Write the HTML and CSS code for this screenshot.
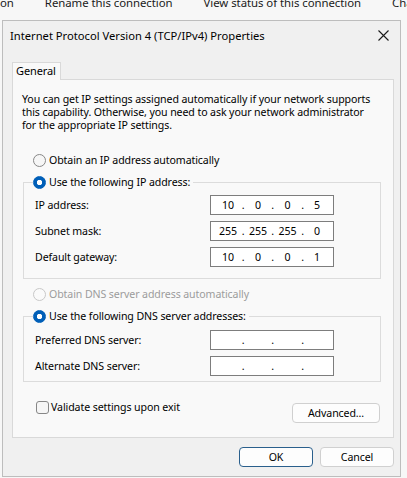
FILE: index.html
```html
<!DOCTYPE html>
<html>
<head>
<meta charset="utf-8">
<link rel="stylesheet" href="styles.css">
</head>
<body>
<div class="topbar"><span>on</span><span>Rename this connection</span><span>View status of this connection</span><span>Cha</span></div>
<div class="dialog">
  <div class="titlebar">
    <span class="title">Internet Protocol Version 4 (TCP/IPv4) Properties</span>
    <svg class="close" width="11" height="11" viewBox="0 0 11 11"><path d="M0.5 0.5L10.5 10.5M10.5 0.5L0.5 10.5" stroke="#1a1a1a" stroke-width="1.1" fill="none"/></svg>
  </div>
  <div class="tabs"><div class="tab">General</div></div>
  <div class="panel">
    <p class="intro">You can get IP settings assigned automatically if your network supports<br>this capability. Otherwise, you need to ask your network administrator<br>for the appropriate IP settings.</p>
    <div class="opt opt-first"><span class="radio"></span>Obtain an IP address automatically</div>
    <fieldset class="group group-ip">
      <legend class="opt"><span class="radio checked"></span>Use the following IP address:</legend>
      <div class="field"><span class="label">IP address:</span><div class="ip"><span>10</span><i>.</i><span>0</span><i>.</i><span>0</span><i>.</i><span>5</span></div></div>
      <div class="field"><span class="label">Subnet mask:</span><div class="ip"><span>255</span><i>.</i><span>255</span><i>.</i><span>255</span><i>.</i><span>0</span></div></div>
      <div class="field"><span class="label">Default gateway:</span><div class="ip"><span>10</span><i>.</i><span>0</span><i>.</i><span>0</span><i>.</i><span>1</span></div></div>
    </fieldset>
    <div class="opt opt-dns disabled"><span class="radio"></span>Obtain DNS server address automatically</div>
    <fieldset class="group group-dns">
      <legend class="opt"><span class="radio checked"></span>Use the following DNS server addresses:</legend>
      <div class="field"><span class="label">Preferred DNS server:</span><div class="ip"><span></span><i>.</i><span></span><i>.</i><span></span><i>.</i><span></span></div></div>
      <div class="field"><span class="label">Alternate DNS server:</span><div class="ip"><span></span><i>.</i><span></span><i>.</i><span></span><i>.</i><span></span></div></div>
    </fieldset>
    <div class="bottomrow">
      <div class="check"><span class="box"></span>Validate settings upon exit</div>
      <div class="btn btn-adv">Advanced...</div>
    </div>
  </div>
  <div class="footer">
    <div class="btn btn-ok">OK</div>
    <div class="btn">Cancel</div>
  </div>
</div>
</body>
</html>
```
FILE: styles.css
```css
html, body {
  margin: 0;
  padding: 0;
}
body {
  width: 407px;
  height: 478px;
  overflow: hidden;
  background: #f7f7f7;
  font-family: "Noto Sans", "Open Sans", sans-serif;
  font-size: 10.6px;
  letter-spacing: -0.1px;
  color: #000;
}
.topbar {
  height: 20px;
  display: flex;
  gap: 31px;
  font-size: 11.4px;
  letter-spacing: -0.05px;
  line-height: 14px;
  color: #1a1a1a;
  white-space: nowrap;
  overflow: hidden;
}
.topbar span {
  margin-top: -4px;
}
.topbar span:first-child {
  width: 14px;
}
.dialog {
  margin-left: 2px;
  width: 399px;
  height: 457px;
  box-sizing: border-box;
  border: 1px solid #bdbdbd;
  background: #f0f0f0;
  display: flex;
  flex-direction: column;
}
.titlebar {
  height: 41px;
  box-sizing: border-box;
  display: flex;
  align-items: flex-start;
  justify-content: space-between;
  padding: 7px 11px 0 7px;
}
.title {
  line-height: 16px;
  font-size: 11.2px;
  letter-spacing: 0;
}
.close {
  margin-top: 2px;
}
.tabs {
  height: 17px;
  padding-left: 9px;
}
.tab {
  position: relative;
  z-index: 1;
  width: 49px;
  height: 18px;
  box-sizing: border-box;
  border: 1px solid #d9d9d9;
  border-bottom: none;
  background: #f9f9f9;
  padding-left: 3px;
  line-height: 15px;
  font-size: 11px;
}
.panel {
  margin: 0 6px 0 9px;
  height: 359px;
  box-sizing: border-box;
  border: 1px solid #d9d9d9;
  background: #f9f9f9;
  padding: 13px 0 0 9px;
}
.intro {
  margin: 0;
  line-height: 13px;
  white-space: nowrap;
}
.opt {
  display: flex;
  align-items: center;
  height: 16px;
  gap: 3px;
  white-space: nowrap;
}
.opt-first {
  margin: 20px 0 0 11px;
}
.opt-dns {
  margin: 7px 0 0 11px;
}
.disabled {
  color: #9c9c9c;
}
.radio {
  width: 13px;
  height: 13px;
  box-sizing: border-box;
  border-radius: 50%;
  border: 1px solid #878787;
  background: #f6f6f6;
  flex: none;
}
.disabled .radio {
  border-color: #c8c8c8;
  background: #fafafa;
}
.radio.checked {
  border-color: #005fb8;
  background: radial-gradient(circle, #fff 0 2.4px, #005fb8 3px);
}
.group {
  margin: 6px 0 0 1px;
  width: 358px;
  box-sizing: border-box;
  border: 1px solid #dcdcdc;
  padding: 5px 0 11px 9px;
  min-width: 0;
}
.group-dns {
  padding-top: 6px;
  padding-bottom: 5px;
}
.group legend {
  padding: 0 3px 0 0;
}
.field {
  display: flex;
  align-items: center;
  height: 20px;
  padding-left: 2px;
}
.field + .field {
  margin-top: 6px;
}
.label {
  width: 175px;
  flex: none;
}
.ip {
  width: 124px;
  height: 20px;
  box-sizing: border-box;
  border: 1px solid #7d7d7d;
  background: #fff;
  display: grid;
  grid-template-columns: 22px 8px 22px 7px 23px 7px 22px;
  padding-left: 6px;
  line-height: 18px;
  text-align: center;
}
.ip i {
  font-style: normal;
}
.bottomrow {
  margin: 17px 13px 0 14px;
  display: flex;
  justify-content: space-between;
  align-items: flex-start;
}
.check {
  display: flex;
  align-items: center;
  height: 16px;
  gap: 2px;
}
.box {
  width: 13px;
  height: 13px;
  box-sizing: border-box;
  border: 1px solid #878787;
  border-radius: 3px;
  background: #f6f6f6;
}
.btn {
  width: 74px;
  height: 20px;
  box-sizing: border-box;
  border: 1px solid #d0d0d0;
  border-radius: 4px;
  background: #fdfdfd;
  text-align: center;
  line-height: 18px;
}
.btn-adv {
  width: 88px;
  margin-top: 4px;
}
.btn-ok {
  border-color: #2a5f8c;
}
.footer {
  display: flex;
  justify-content: flex-end;
  gap: 7px;
  margin-top: 9px;
  padding-right: 6px;
}
```
